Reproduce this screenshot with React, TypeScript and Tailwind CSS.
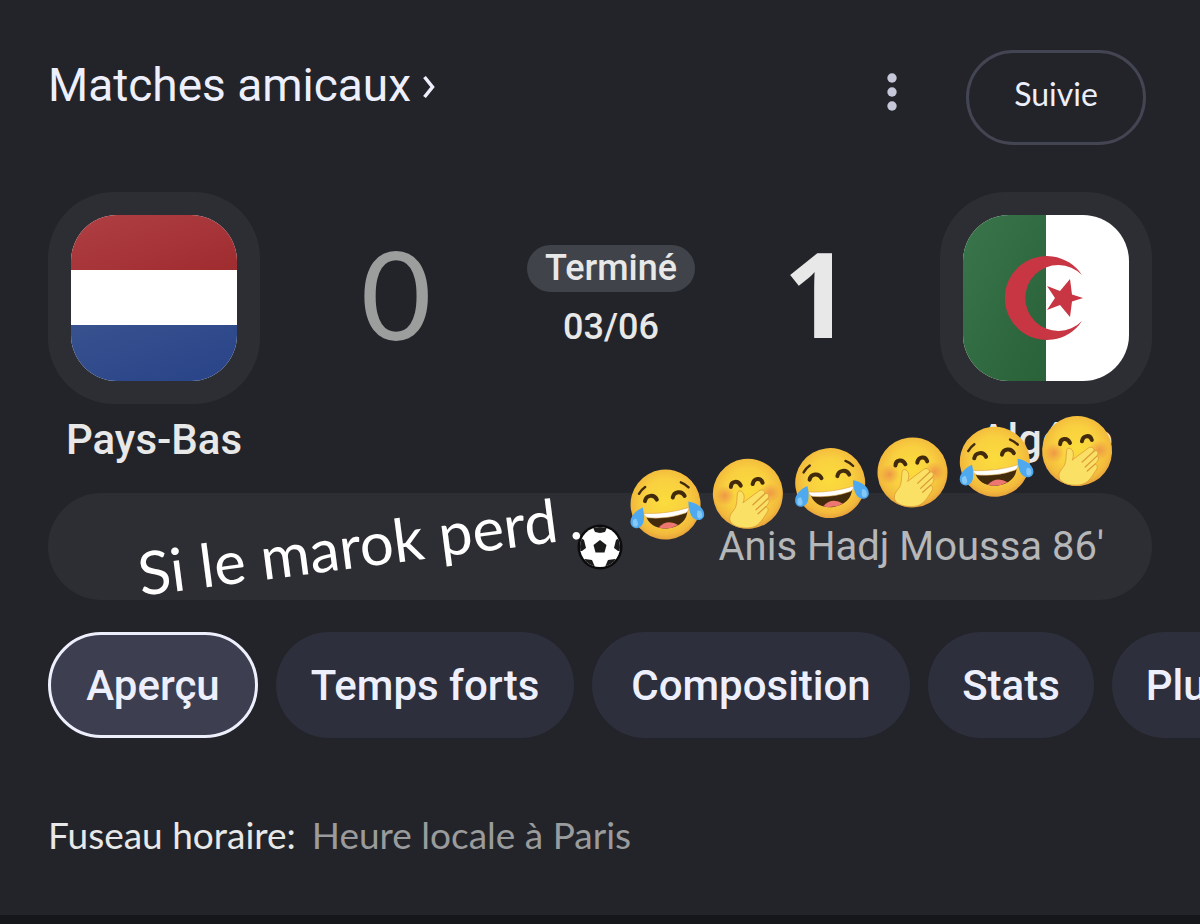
import React from "react";

const tabs = [
  { label: "Aperçu", width: "min-w-[210px]" },
  { label: "Temps forts", width: "min-w-[298px]" },
  { label: "Composition", width: "min-w-[318px]" },
  { label: "Stats", width: "min-w-[166px]" },
  { label: "Plus", width: "min-w-[150px]" },
];

function NetherlandsFlag() {
  return (
    <svg viewBox="0 0 166 166" className="size-full" role="img" aria-label="Drapeau des Pays-Bas">
      <defs>
        <linearGradient id="nl-red" x1="0" y1="0" x2="1" y2="1">
          <stop offset="0" stopColor="#af3f44" />
          <stop offset="1" stopColor="#9f2c2f" />
        </linearGradient>
        <linearGradient id="nl-blue" x1="0" y1="0" x2="1" y2="1">
          <stop offset="0" stopColor="#38528f" />
          <stop offset="1" stopColor="#284388" />
        </linearGradient>
      </defs>
      <rect width="166" height="166" fill="#fff" />
      <rect width="166" height="55" fill="url(#nl-red)" />
      <rect y="110" width="166" height="56" fill="url(#nl-blue)" />
    </svg>
  );
}

function AlgeriaFlag() {
  return (
    <svg viewBox="0 0 166 166" className="size-full" role="img" aria-label="Drapeau de l'Algérie">
      <defs>
        <linearGradient id="dz-green" x1="0" y1="0" x2="1" y2="1">
          <stop offset="0" stopColor="#39754b" />
          <stop offset="1" stopColor="#296138" />
        </linearGradient>
      </defs>
      <rect width="166" height="166" fill="#fff" />
      <rect width="83" height="166" fill="url(#dz-green)" />
      <path d="M119 60 A42 42 0 1 0 119 106 A33 33 0 1 1 119 60 Z" fill="#c83543" />
      <path
        d="M120 83 L109 86.5 L107 102 L97 90 L84 95 L92 83 L84 71 L97 76 L107 64 L109 79.500 Z"
        fill="#c83543"
      />
    </svg>
  );
}

function FaceFill({ id }: { id: string }) {
  return (
    <>
      <defs>
        <radialGradient id={id} cx="0.5" cy="0.45" r="0.56">
          <stop offset="0" stopColor="#fbdc3c" />
          <stop offset="0.55" stopColor="#f9d040" />
          <stop offset="0.85" stopColor="#f3ba3c" />
          <stop offset="1" stopColor="#e59f3c" />
        </radialGradient>
      </defs>
      <circle r="35" fill={`url(#${id})`} />
    </>
  );
}

function LaughEmoji({ id }: { id: string }) {
  return (
    <svg viewBox="-38 -38 76 76" className="size-[76px] shrink-0" role="img" aria-label="Visage riant aux larmes">
      <FaceFill id={id} />
      <g fill="none" stroke="#422b0d" strokeLinecap="round" strokeWidth="4">
        <path d="M-20 -6 C-18 -12 -10 -12 -8 -6" />
        <path d="M8 -6 C10 -12 18 -12 20 -6" />
        <path d="M-25 -14 Q-22 -18 -18 -20" strokeWidth="2.400" />
        <path d="M25 -14 Q22 -18 18 -20" strokeWidth="2.400" />
      </g>
      <path d="M-21 8 Q0 12 21 8 C20 18 11 24 0 24 C-11 24 -20 18 -21 8 Z" fill="#422b0d" />
      <path d="M-23 6 Q0 10 23 6 Q22 10 19 11 Q0 15 -19 11 Q-22 10 -23 6 Z" fill="#fff" stroke="#d99a3a" strokeWidth="0.500" />
      <path d="M-10 22 Q0 14 10 22 Q0 26 -10 22 Z" fill="#ed7770" />
      <path d="M-23 0 C-30 2 -38 8 -37 15 C-36 22 -26 21 -24 14 Q-22 8 -23 0 Z" fill="#4fa9ee" />
      <path d="M23 0 C30 2 38 8 37 15 C36 22 26 21 24 14 Q22 8 23 0 Z" fill="#4fa9ee" />
      <path d="M-34 11 C-36 15 -35 19 -31 18 C-29 16 -30 13 -31 10 Z" fill="#84c8f7" />
      <path d="M34 11 C36 15 35 19 31 18 C29 16 30 13 31 10 Z" fill="#84c8f7" />
    </svg>
  );
}

function GiggleEmoji({ id }: { id: string }) {
  return (
    <svg viewBox="-38 -38 76 76" className="size-[76px] shrink-0" role="img" aria-label="Visage avec une main sur la bouche">
      <defs>
        <radialGradient id={`${id}-blush`}>
          <stop offset="0" stopColor="#e8754a" stopOpacity="0.6" />
          <stop offset="1" stopColor="#e8754a" stopOpacity="0" />
        </radialGradient>
      </defs>
      <FaceFill id={id} />
      <circle cx="-23" cy="-1" r="10" fill={`url(#${id}-blush)`} />
      <circle cx="22" cy="2" r="10" fill={`url(#${id}-blush)`} />
      <g fill="none" stroke="#422b0d" strokeLinecap="round" strokeWidth="4">
        <path d="M-16 -9 C-15 -15 -8 -15 -6 -9" />
        <path d="M6 -9 C8 -15 15 -15 16 -9" />
      </g>
      <g transform="rotate(7)">
        <path
          d="M-5 9 C-3 5 -3 -2 -8 -3 C-12 -3 -10 5 -12 12 C-13 17 -20 20 -18 27 C-16 32 -8 35 2 34 C9 33 12 29 15 25 L19 19 C21 16 20 14 18 13 C22 9 22 6 20 5 C22 1 20 -1 17 0 C17 -4 13 -5 10 -2 Z"
          fill="#fbe066"
          stroke="#dc9c38"
          strokeWidth="0.800"
          strokeLinejoin="round"
        />
        <path d="M17 0 L5 11 M20 5 L8 16 M18 13 L10 20" fill="none" stroke="#dc9c38" strokeWidth="1.300" strokeLinecap="round" />
      </g>
    </svg>
  );
}

function SoccerBall() {
  return (
    <svg viewBox="-24 -24 48 48" className="size-12" role="img" aria-label="But">
      <defs>
        <clipPath id="ball-clip">
          <circle r="20" />
        </clipPath>
      </defs>
      <circle r="22.500" fill="#0b0b0c" />
      <circle r="20" fill="#fff" />
      <g clipPath="url(#ball-clip)" fill="#1b1b1c">
        <path d="M0 -7 L6.500 -2 L4.500 5.500 L-4.500 5.500 L-6.500 -2 Z" />
        <path d="M-8 -22 L8 -22 L5 -15 L0 -14 L-5 -15 Z" />
        <path d="M22 -11 L16 -7 L14 1 L18 4 L24 4 Z" />
        <path d="M-22 -11 L-16 -7 L-14 1 L-18 4 L-24 4 Z" />
        <path d="M5 20 L8 13 L15 12 L20 16 L12 24 Z" />
        <path d="M-5 20 L-8 13 L-15 12 L-20 16 L-12 24 Z" />
      </g>
    </svg>
  );
}

function Team({ name, children }: { name: string; children: React.ReactNode }) {
  return (
    <div className="flex w-[212px] shrink-0 flex-col items-center gap-3">
      <div className="rounded-[66px] bg-[#2d2e33] p-[23px]">
        <div className="size-[166px] overflow-hidden rounded-[46px]">{children}</div>
      </div>
      <span className="text-[42px] leading-[48px] font-medium text-[#e8e8e8]">{name}</span>
    </div>
  );
}

function Sticker() {
  return (
    <div className="absolute top-[42px] left-[90px] flex origin-left rotate-[-7.4deg] items-center gap-[7px] whitespace-nowrap">
      <span className="flex w-[487px] gap-[10px] font-['Lato','Liberation_Sans',sans-serif] text-[60px] leading-[76px] text-white">
        <span>Si le marok perd</span>
        <span>.</span>
      </span>
      <LaughEmoji id="laugh-1" />
      <GiggleEmoji id="giggle-1" />
      <LaughEmoji id="laugh-2" />
      <GiggleEmoji id="giggle-2" />
      <LaughEmoji id="laugh-3" />
      <GiggleEmoji id="giggle-3" />
    </div>
  );
}

export default function App() {
  return (
    <div className="min-h-screen overflow-hidden bg-[#16171b] font-['Roboto','Liberation_Sans',sans-serif]">
      <main className="bg-[#232429] pt-[50px] pb-14">
        <header className="flex items-start justify-between pr-[54px] pl-12">
          <h1>
            <a href="#matches" className="flex items-center gap-3 text-[46px] leading-[70px] text-[#eeeffc]">
              Matches amicaux
              <svg viewBox="0 0 12 24" className="mt-1 h-6 w-3" fill="none" stroke="currentColor" strokeWidth="3.500" aria-hidden="true">
                <path d="M1.500 2 L9.500 12 L1.500 22" />
              </svg>
            </a>
          </h1>
          <div className="flex items-start gap-[50px]">
            <button type="button" aria-label="Plus d'options" className="flex h-[84px] w-12 items-center justify-center">
              <svg viewBox="0 0 10 38" className="h-[38px] w-[10px]" fill="#c6c7d8" aria-hidden="true">
                <circle cx="5" cy="5" r="4.700" />
                <circle cx="5" cy="19" r="4.700" />
                <circle cx="5" cy="33" r="4.700" />
              </svg>
            </button>
            <button
              type="button"
              className="h-[95px] w-[180px] rounded-full border-[3px] border-[#434552] pb-2 font-['Lato','Liberation_Sans',sans-serif] text-[32px] text-[#eeeffc]"
            >
              Suivie
            </button>
          </div>
        </header>

        <section className="mx-12 mt-[47px] flex items-start justify-between">
          <Team name="Pays-Bas">
            <NetherlandsFlag />
          </Team>
          <div className="flex h-[208px] flex-1 items-center justify-between pr-[98px] pl-[102px]">
            <span className="flex w-[68px] justify-center pb-1.5 font-['Lato','Liberation_Sans',sans-serif] text-[122px] leading-none text-[#9c9e9d]">
              0
            </span>
            <div className="flex flex-col items-center gap-[15px] text-[#e8e8e8]">
              <span className="w-[168px] rounded-full bg-[#404349] text-center text-[36px] leading-[47px] font-medium">Terminé</span>
              <span className="text-[36px] leading-10 font-medium">03/06</span>
            </div>
            <span className="flex w-[50px] justify-center pb-1.5 font-['Open_Sans','Liberation_Sans',sans-serif] text-[118px] leading-none font-bold text-[#e8e8e8]">
              1
            </span>
          </div>
          <Team name="Algérie">
            <AlgeriaFlag />
          </Team>
        </section>

        <section className="relative mx-12 mt-[29px] grid h-[107px] grid-cols-[1fr_48px_1fr] items-center rounded-full bg-[#2d2e33]">
          <span />
          <SoccerBall />
          <span className="pr-12 text-right text-[40px] leading-[48px] text-[#b6b7b9]">Anis Hadj Moussa 86'</span>
          <Sticker />
        </section>

        <nav className="mt-8 flex gap-[18px] overflow-hidden pl-12 text-[42px] font-medium text-[#eeeffc]">
          {tabs.map((tab, i) => (
            <button
              key={tab.label}
              type="button"
              aria-pressed={i === 0}
              className={`h-[106px] shrink-0 rounded-full px-8 ${tab.width} ${
                i === 0 ? "border-[3px] border-[#eeeffc] bg-[#3d3f50]" : "bg-[#2d2f3c]"
              }`}
            >
              {tab.label}
            </button>
          ))}
        </nav>

        <p className="mt-[73px] flex gap-4 px-12 font-['Lato','Liberation_Sans',sans-serif] text-[37px] leading-[48px]">
          <span className="text-[#e8e8e8]">Fuseau horaire:</span>
          <span className="text-[#9a9b9c]">Heure locale à Paris</span>
        </p>
      </main>
    </div>
  );
}
